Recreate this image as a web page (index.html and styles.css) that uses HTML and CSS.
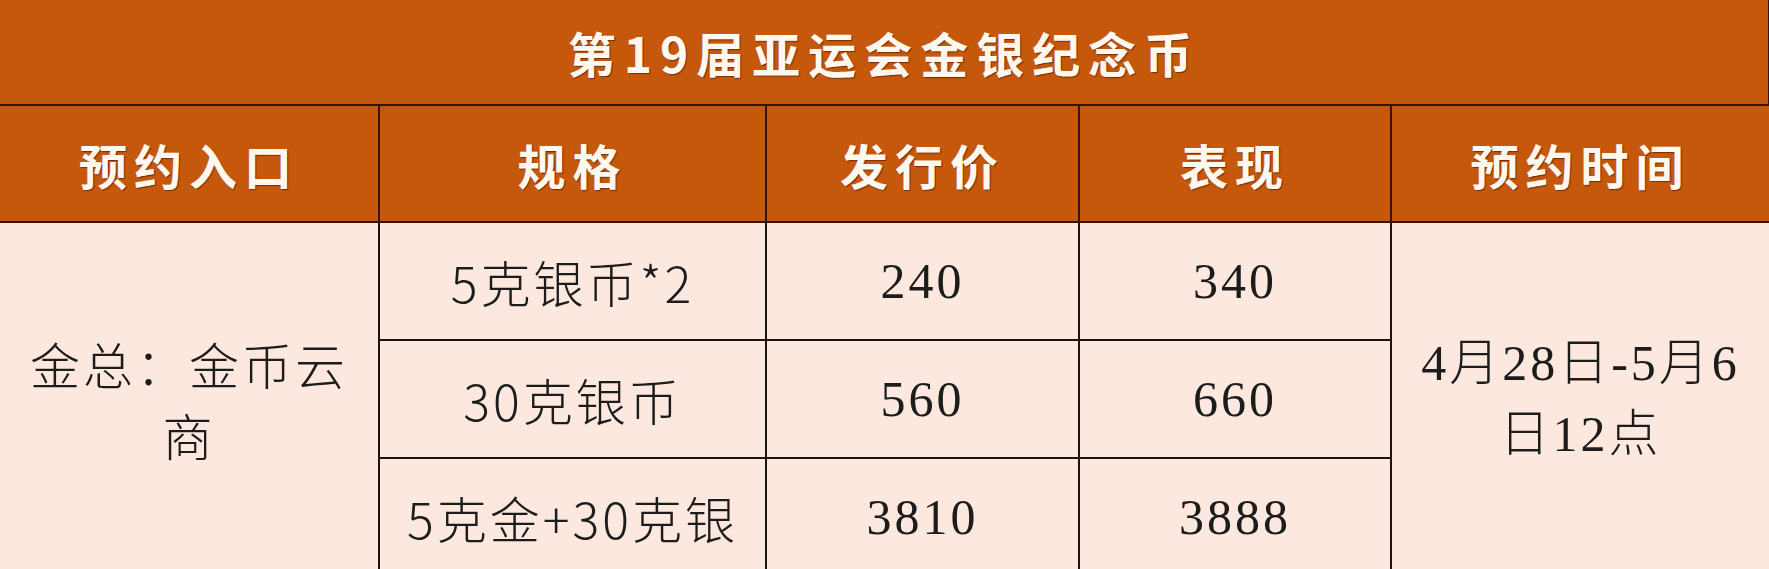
FILE: index.html
```html
<!DOCTYPE html>
<html lang="zh-CN">
<head>
<meta charset="utf-8">
<title>第19届亚运会金银纪念币</title>
<link rel="stylesheet" href="styles.css">
</head>
<body>
<table class="coin-table">
  <colgroup>
    <col class="c1"><col class="c2"><col class="c3"><col class="c4"><col class="c5">
  </colgroup>
  <thead>
    <tr class="title-row">
      <th colspan="5" class="title">第19届亚运会金银纪念币</th>
    </tr>
    <tr class="head-row">
      <th>预约入口</th>
      <th>规格</th>
      <th>发行价</th>
      <th>表现</th>
      <th class="last">预约时间</th>
    </tr>
  </thead>
  <tbody>
    <tr class="body-row">
      <td rowspan="3" class="entry">金总：金币云商</td>
      <td class="spec">5克银币*2</td>
      <td class="num">240</td>
      <td class="num">340</td>
      <td rowspan="3" class="date last">4月28日-5月6<br>日12点</td>
    </tr>
    <tr class="body-row">
      <td class="spec">30克银币</td>
      <td class="num">560</td>
      <td class="num">660</td>
    </tr>
    <tr class="body-row">
      <td class="spec">5克金+30克银</td>
      <td class="num">3810</td>
      <td class="num">3888</td>
    </tr>
  </tbody>
</table>
</body>
</html>
```

FILE: styles.css
```css
html, body {
  margin: 0;
  padding: 0;
  background: #fce8de;
}

.coin-table {
  width: 1769px;
  table-layout: fixed;
  border-collapse: collapse;
  border-spacing: 0;
  font-family: "Noto Sans CJK SC", sans-serif;
  color: #1c1c1c;
}

.c1 { width: 379px; }
.c2 { width: 387px; }
.c3 { width: 313px; }
.c4 { width: 312px; }
.c5 { width: 378px; }

.coin-table th,
.coin-table td {
  padding: 0 10px;
  text-align: center;
  vertical-align: middle;
  border-right: 2px solid #1a1410;
  border-bottom: 2px solid #1a1410;
}

.coin-table .last { border-right: none; }

.title-row { height: 105px; }
.head-row { height: 117px; }
.body-row { height: 118px; }

.coin-table th {
  background: #c6580b;
  color: #fff8ee;
  font-weight: 700;
  text-shadow: 1px 1px 1px rgba(90, 25, 0, 0.7);
  border-color: #3a1205;
}

.title {
  font-size: 48px;
  letter-spacing: 8px;
  border-right: none;
}

.head-row th {
  font-size: 48px;
  letter-spacing: 7px;
}

.coin-table td {
  background: #fce8de;
  font-size: 50px;
  font-weight: 300;
  letter-spacing: 3px;
  line-height: 71px;
}

.num {
  font-family: "Liberation Serif", "Noto Sans CJK SC", serif;
  font-size: 55px;
  letter-spacing: 0;
}

.date {
  font-family: "Liberation Serif", "Noto Sans CJK SC", serif;
  font-size: 51px;
  letter-spacing: 2px;
  line-height: 68px;
}
```
